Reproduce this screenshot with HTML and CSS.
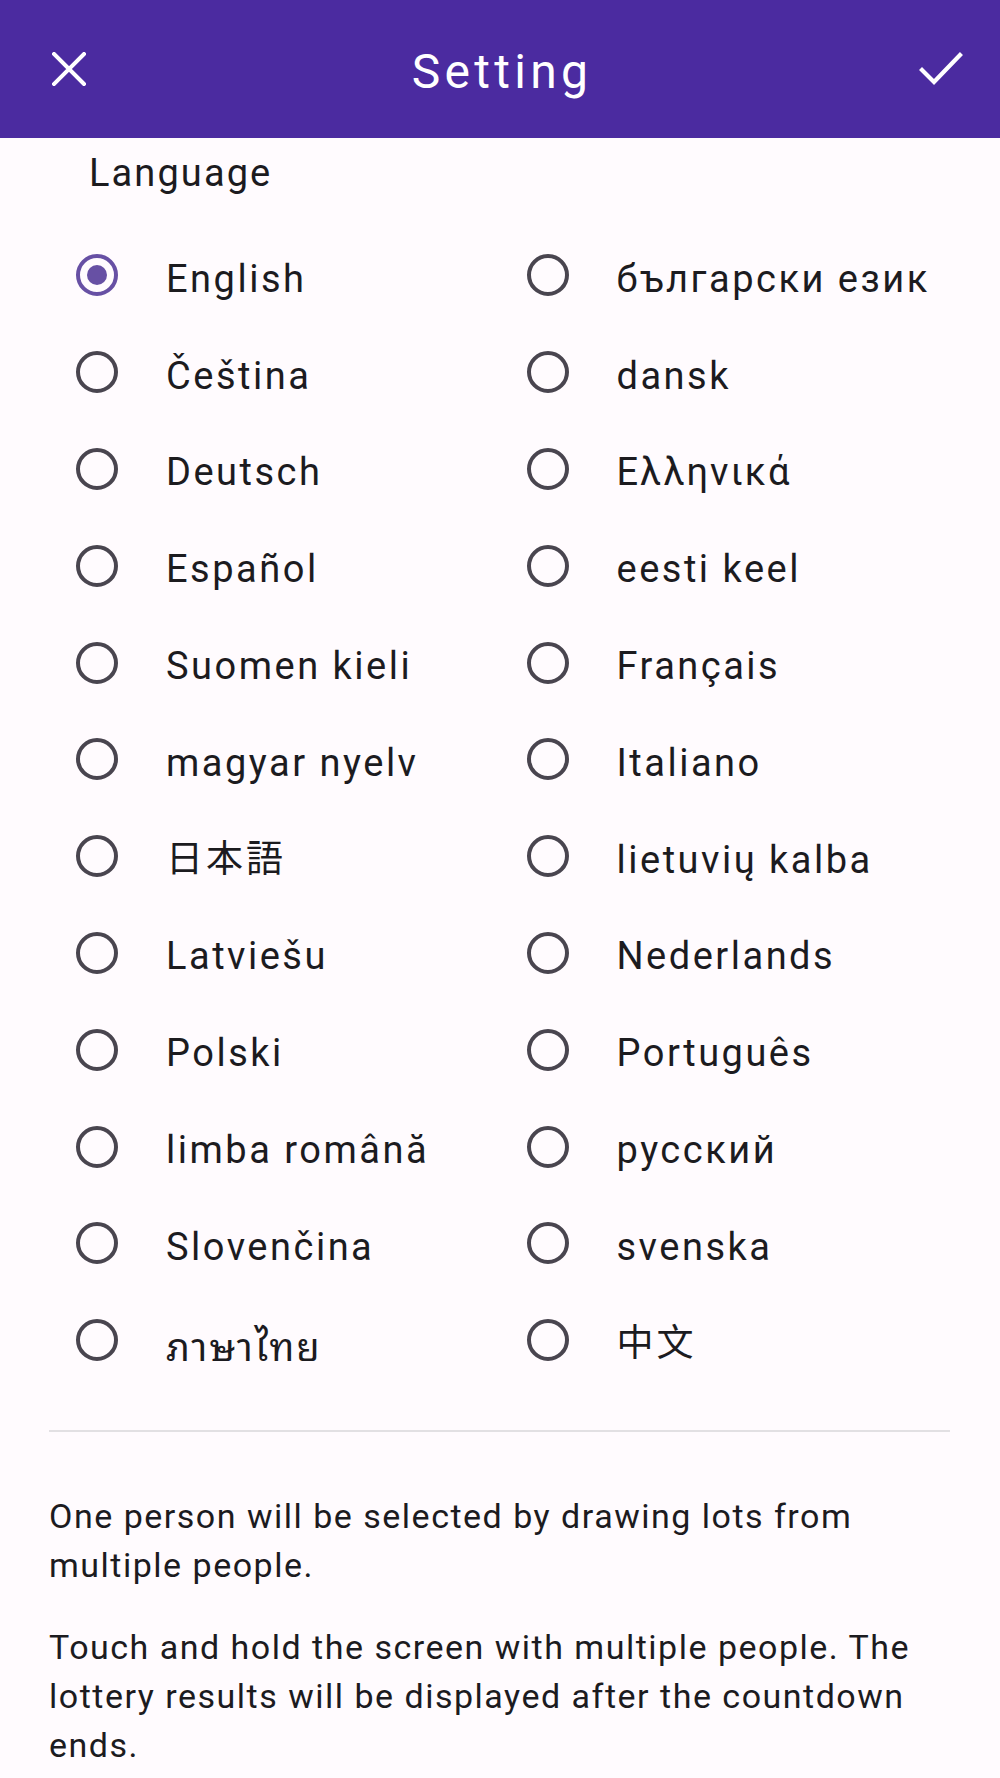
FILE: index.html
```html
<!DOCTYPE html>
<html lang="en">
<head>
<meta charset="utf-8">
<title>Setting</title>
<link rel="stylesheet" href="styles.css">
</head>
<body>
<header class="appbar">
  <div class="appbar-left">
    <svg class="icon-close" viewBox="0 0 34 34" width="34" height="34"><path d="M2 2 L32 32 M32 2 L2 32" stroke="#fff" stroke-width="4" stroke-linecap="square" fill="none"/></svg>
  </div>
  <h1 class="appbar-title">Setting</h1>
  <div class="appbar-right">
    <svg class="icon-check" viewBox="0 0 44 34" width="44" height="34"><path d="M3 18 L15 30 L41 3" stroke="#fff" stroke-width="4.2" stroke-linecap="square" stroke-linejoin="miter" fill="none"/></svg>
  </div>
</header>
<main class="content">
  <div class="section-label">Language</div>
  <div class="lang-grid">
    <div class="lang-item"><span class="radio radio-on"></span><span class="lang-name">English</span></div>
    <div class="lang-item"><span class="radio"></span><span class="lang-name">български език</span></div>
    <div class="lang-item"><span class="radio"></span><span class="lang-name">Čeština</span></div>
    <div class="lang-item"><span class="radio"></span><span class="lang-name">dansk</span></div>
    <div class="lang-item"><span class="radio"></span><span class="lang-name">Deutsch</span></div>
    <div class="lang-item"><span class="radio"></span><span class="lang-name greek">Ελληνικά</span></div>
    <div class="lang-item"><span class="radio"></span><span class="lang-name">Español</span></div>
    <div class="lang-item"><span class="radio"></span><span class="lang-name">eesti keel</span></div>
    <div class="lang-item"><span class="radio"></span><span class="lang-name">Suomen kieli</span></div>
    <div class="lang-item"><span class="radio"></span><span class="lang-name">Français</span></div>
    <div class="lang-item"><span class="radio"></span><span class="lang-name">magyar nyelv</span></div>
    <div class="lang-item"><span class="radio"></span><span class="lang-name">Italiano</span></div>
    <div class="lang-item"><span class="radio"></span><span class="lang-name cjk" lang="ja">日本語</span></div>
    <div class="lang-item"><span class="radio"></span><span class="lang-name">lietuvių kalba</span></div>
    <div class="lang-item"><span class="radio"></span><span class="lang-name">Latviešu</span></div>
    <div class="lang-item"><span class="radio"></span><span class="lang-name">Nederlands</span></div>
    <div class="lang-item"><span class="radio"></span><span class="lang-name">Polski</span></div>
    <div class="lang-item"><span class="radio"></span><span class="lang-name">Português</span></div>
    <div class="lang-item"><span class="radio"></span><span class="lang-name">limba română</span></div>
    <div class="lang-item"><span class="radio"></span><span class="lang-name">русский</span></div>
    <div class="lang-item"><span class="radio"></span><span class="lang-name">Slovenčina</span></div>
    <div class="lang-item"><span class="radio"></span><span class="lang-name">svenska</span></div>
    <div class="lang-item"><span class="radio"></span><span class="lang-name thai" lang="th">ภาษาไทย</span></div>
    <div class="lang-item"><span class="radio"></span><span class="lang-name cjk" lang="zh">中文</span></div>
  </div>
  <hr class="divider">
  <p class="desc">One person will be selected by drawing lots from multiple people.</p>
  <p class="desc desc-second">Touch and hold the screen with multiple people. The lottery results will be displayed after the countdown ends.</p>
</main>
</body>
</html>
```

FILE: styles.css
```css
* { box-sizing: border-box; }

html, body {
  margin: 0;
  padding: 0;
  background: #fffbfe;
}

body {
  font-family: Roboto, "Noto Sans", "Noto Sans CJK JP", sans-serif;
  color: #1c1b1f;
}

.appbar {
  height: 138px;
  background: #4b2ba0;
  display: grid;
  grid-template-columns: 1fr auto 1fr;
  align-items: center;
}

.appbar-left {
  display: flex;
  justify-content: flex-start;
  padding-left: 52px;
}

.appbar-right {
  display: flex;
  justify-content: flex-end;
  padding-right: 37px;
}

.icon-close, .icon-check { display: block; }

.appbar-title {
  margin: 0;
  font-size: 48px;
  font-weight: 400;
  color: #ffffff;
  letter-spacing: 4.3px;
  line-height: 1;
  padding-top: 6px;
  padding-left: 4px;
}

.content {
  padding: 0 50px 0 49px;
}

.section-label {
  font-size: 38px;
  line-height: 44px;
  letter-spacing: 2.1px;
  padding: 13px 0 0 40px;
  height: 89px;
}

.lang-grid {
  display: grid;
  grid-template-columns: 1fr 1fr;
  grid-auto-rows: 96.8px;
}

.lang-item {
  display: flex;
  align-items: center;
}

.radio {
  width: 42px;
  height: 42px;
  border-radius: 50%;
  border: 4.5px solid #49454f;
  margin-left: 27px;
  flex: none;
  display: flex;
  align-items: center;
  justify-content: center;
}

.radio-on {
  border-color: #6750a4;
}

.radio-on::after {
  content: "";
  width: 20px;
  height: 20px;
  border-radius: 50%;
  background: #6750a4;
}

.lang-name {
  margin-left: 48px;
  font-size: 38px;
  letter-spacing: 2.5px;
  line-height: 44px;
  padding-top: 7px;
  white-space: nowrap;
}

.lang-name.greek {
  letter-spacing: 2px;
}

.lang-name.cjk {
  font-family: "Noto Sans CJK JP", "Noto Sans CJK SC", sans-serif;
  font-size: 37px;
  letter-spacing: 3px;
  padding-top: 0;
}

.lang-name.thai {
  font-family: "Noto Sans Thai Looped", "Noto Serif Thai", "Loma", "Garuda", "Tlwg Typo", "Noto Sans Thai", "Noto Sans", "DejaVu Sans", sans-serif;
  letter-spacing: 2px;
}

.divider {
  border: none;
  height: 2px;
  background: #e2e0e3;
  margin: 41px 0 0 0;
}

.desc {
  margin: 60px 0 0 0;
  font-size: 34px;
  line-height: 49px;
  letter-spacing: 1.5px;
}

.desc-second {
  margin-top: 33px;
}
```
